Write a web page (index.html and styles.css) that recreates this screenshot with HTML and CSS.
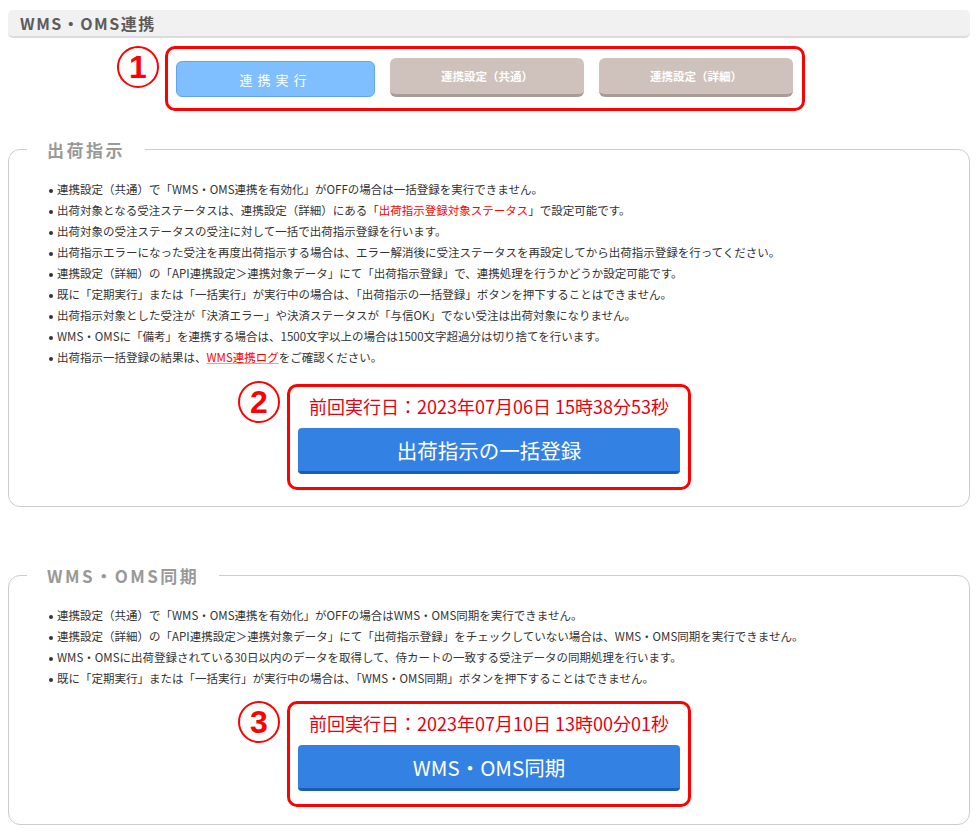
FILE: index.html
```html
<!DOCTYPE html>
<html>
	<head>
		<title>WMS・OMS連携</title>
		<meta charset="UTF-8">
		<meta name="viewport" content="width=device-width, initial-scale=1.0">
		<link rel="stylesheet" href="styles.css">
	</head>
	<body>
		<div class="page">
			<div class="title-bar">WMS・OMS連携</div>

			<div class="tab-row">
				<span class="num">1</span>
				<div class="mark-box tabs">
					<button class="tab active">連携実行</button>
					<button class="tab">連携設定（共通）</button>
					<button class="tab">連携設定（詳細）</button>
				</div>
			</div>

			<fieldset class="panel">
				<legend>出荷指示</legend>
				<ul class="notes">
					<li>連携設定（共通）で「WMS・OMS連携を有効化」がOFFの場合は一括登録を実行できません。</li>
					<li>出荷対象となる受注ステータスは、連携設定（詳細）にある「<span class="hl">出荷指示登録対象ステータス</span>」で設定可能です。</li>
					<li>出荷対象の受注ステータスの受注に対して一括で出荷指示登録を行います。</li>
					<li>出荷指示エラーになった受注を再度出荷指示する場合は、エラー解消後に受注ステータスを再設定してから出荷指示登録を行ってください。</li>
					<li>連携設定（詳細）の「API連携設定＞連携対象データ」にて「出荷指示登録」で、連携処理を行うかどうか設定可能です。</li>
					<li>既に「定期実行」または「一括実行」が実行中の場合は、「出荷指示の一括登録」ボタンを押下することはできません。</li>
					<li>出荷指示対象とした受注が「決済エラー」や決済ステータスが「与信OK」でない受注は出荷対象になりません。</li>
					<li>WMS・OMSに「備考」を連携する場合は、1500文字以上の場合は1500文字超過分は切り捨てを行います。</li>
					<li>出荷指示一括登録の結果は、<a class="log-link" href="#">WMS連携ログ</a>をご確認ください。</li>
				</ul>
				<div class="run-row">
					<span class="num">2</span>
					<div class="mark-box run">
						<p class="last-run">前回実行日：2023年07月06日 15時38分53秒</p>
						<button class="run-btn">出荷指示の一括登録</button>
					</div>
				</div>
			</fieldset>

			<fieldset class="panel panel-sync">
				<legend>WMS・OMS同期</legend>
				<ul class="notes">
					<li>連携設定（共通）で「WMS・OMS連携を有効化」がOFFの場合はWMS・OMS同期を実行できません。</li>
					<li>連携設定（詳細）の「API連携設定＞連携対象データ」にて「出荷指示登録」をチェックしていない場合は、WMS・OMS同期を実行できません。</li>
					<li>WMS・OMSに出荷登録されている30日以内のデータを取得して、侍カートの一致する受注データの同期処理を行います。</li>
					<li>既に「定期実行」または「一括実行」が実行中の場合は、「WMS・OMS同期」ボタンを押下することはできません。</li>
				</ul>
				<div class="run-row">
					<span class="num">3</span>
					<div class="mark-box run">
						<p class="last-run">前回実行日：2023年07月10日 13時00分01秒</p>
						<button class="run-btn">WMS・OMS同期</button>
					</div>
				</div>
			</fieldset>
		</div>
	</body>
</html>
```

FILE: styles.css
```css
body {
	margin: 0;
	background: white;
	color: #333;
	font-family: "Noto Sans CJK JP", "Noto Sans", sans-serif;
}
.page {
	padding: 10px 10px 0 8px;
}
.title-bar {
	height: 26px;
	line-height: 26px;
	padding-left: 12px;
	background: #f1f1f1;
	border-bottom: 2px solid #dcdcdc;
	border-radius: 5px;
	font-size: 16px;
	font-weight: bold;
	letter-spacing: 1.5px;
	color: #5c5c5c;
}
.tab-row {
	display: flex;
	align-items: flex-start;
	gap: 6px;
	margin-top: 8px;
	padding-left: 109px;
}
.num {
	width: 38px;
	height: 38px;
	border: 2px solid #f00;
	border-radius: 50%;
	display: flex;
	justify-content: center;
	align-items: center;
	font-family: "Liberation Sans", sans-serif;
	font-size: 32px;
	font-weight: bold;
	line-height: 1;
	color: #f00;
	background: white;
}
.mark-box {
	border: 3px solid #f00;
	border-radius: 10px;
	background: white;
}
.tabs {
	display: flex;
	gap: 15px;
	padding: 9px 9px 11px 8px;
}
.tab {
	box-sizing: border-box;
	width: 194px;
	height: 39px;
	border: none;
	border-bottom: 3px solid #a99c96;
	border-radius: 6px;
	background: #cfc2bc;
	color: white;
	font-family: inherit;
	font-size: 11.5px;
	font-weight: bold;
}
.tab.active {
	width: 199px;
	height: 36px;
	margin-top: 3px;
	border: 1px solid #5fa6ee;
	background: #80bfff;
	font-size: 13px;
	font-weight: normal;
	letter-spacing: 5px;
}
.panel {
	margin: 26px 0 0 0;
	padding: 0 0 16px 0;
	border: 1px solid #ccc;
	border-radius: 12px;
	min-width: 0;
}
.panel-sync {
	margin-top: 56px;
	padding-bottom: 17px;
}
.panel legend {
	margin-left: 18px;
	padding: 0 20px;
	font-size: 17px;
	font-weight: bold;
	letter-spacing: 2.5px;
	color: #999;
}
.notes {
	margin: 17px 0 0 48px;
	padding: 0;
	list-style: none;
	font-size: 11.5px;
	line-height: 21px;
	color: #333;
}
.notes li::before {
	content: "";
	display: inline-block;
	width: 4px;
	height: 4px;
	margin: 0 4px 0 -8px;
	border-radius: 50%;
	background: #333;
	vertical-align: middle;
}
.hl {
	color: #f00;
}
.log-link {
	color: #f00;
	text-decoration: underline;
	text-decoration-color: #9bb8d8;
}
.run-row {
	display: grid;
	grid-template-columns: 1fr auto 1fr;
	align-items: start;
	margin-top: 16px;
}
.panel-sync .run-row {
	margin-top: 12px;
}
.run-row .num {
	justify-self: end;
	margin-right: 7px;
	margin-top: -3px;
}
.panel-sync .run-row .num {
	margin-top: 0;
}
.run {
	box-sizing: border-box;
	width: 404px;
	padding: 8px 8px 13px;
}
.last-run {
	margin: 0 0 11px;
	text-align: center;
	font-size: 18px;
	line-height: 22px;
	color: #e60012;
}
.run-btn {
	box-sizing: border-box;
	display: block;
	width: 100%;
	height: 46px;
	border: none;
	border-bottom: 3px solid #1b5db5;
	border-radius: 4px;
	background: #3381e2;
	color: white;
	font-family: inherit;
	font-size: 20.5px;
}
```
